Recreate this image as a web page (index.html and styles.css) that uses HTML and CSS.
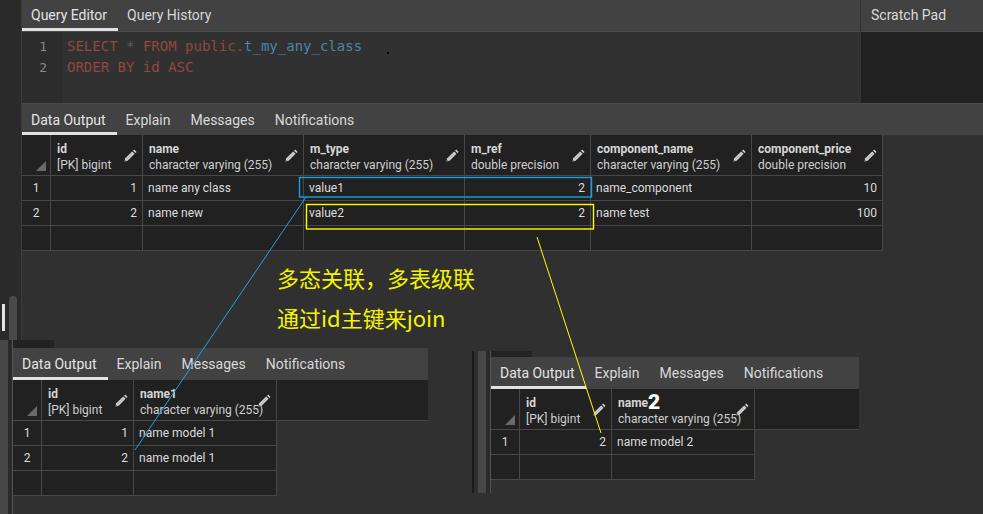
FILE: index.html
```html
<!DOCTYPE html>
<html lang="zh">
<head>
<meta charset="utf-8">
<title>Query Editor</title>
<link rel="stylesheet" href="styles.css">
</head>
<body>
<svg class="defs" aria-hidden="true">
  <symbol id="pencil" viewBox="0 0 16 16">
    <path d="M1.6 14.4l1-3.7 7.9-7.9 2.7 2.7-7.9 7.9z" fill="#d4d4d4"/>
    <path d="M11.5 1.9l1.3-1.3 2.7 2.7-1.3 1.3z" fill="#d4d4d4"/>
    <path d="M1.6 14.4l0.6-2.3 1.7 1.7z" fill="#6a6a6a"/>
    <path d="M4 11.8l7-7" stroke="#9a9a9a" stroke-width="0.8"/>
  </symbol>
</svg>

<div class="app">
  <aside class="sidebar">
    <div class="sb-row"><span class="sb-mark"></span><span class="sb-thumb"></span></div>
  </aside>

  <main class="main">
    <div class="top">
      <section class="editor-panel">
        <nav class="tabs tabs-top">
          <span class="tab active">Query Editor</span>
          <span class="tab">Query History</span>
        </nav>
        <div class="editor">
          <div class="gutter">1<br>2</div>
          <pre class="code"><span class="kw">SELECT</span> <span class="op">*</span> <span class="kw">FROM</span> <span class="kw">public.</span><span class="id">t_my_any_class</span>
<span class="kw">ORDER BY id ASC</span></pre>
        </div>
      </section>
      <section class="scratch">
        <div class="scratch-head">Scratch Pad</div>
        <div class="scratch-body"></div>
      </section>
    </div>

    <nav class="tabs tabs-out">
      <span class="tab active">Data Output</span>
      <span class="tab">Explain</span>
      <span class="tab">Messages</span>
      <span class="tab">Notifications</span>
    </nav>

    <div class="grid">
      <div class="hrow">
        <div class="hc w-rn corner"><span class="sort"></span></div>
        <div class="hc w-id"><div class="htext"><div class="hn">id</div><div class="ht">[PK] bigint</div></div><svg class="pencil"><use href="#pencil"/></svg></div>
        <div class="hc w-str"><div class="htext"><div class="hn">name</div><div class="ht">character varying (255)</div></div><svg class="pencil"><use href="#pencil"/></svg></div>
        <div class="hc w-str"><div class="htext"><div class="hn">m_type</div><div class="ht">character varying (255)</div></div><svg class="pencil"><use href="#pencil"/></svg></div>
        <div class="hc w-ref"><div class="htext"><div class="hn">m_ref</div><div class="ht">double precision</div></div><svg class="pencil"><use href="#pencil"/></svg></div>
        <div class="hc w-str"><div class="htext"><div class="hn">component_name</div><div class="ht">character varying (255)</div></div><svg class="pencil"><use href="#pencil"/></svg></div>
        <div class="hc w-price"><div class="htext"><div class="hn">component_price</div><div class="ht">double precision</div></div><svg class="pencil"><use href="#pencil"/></svg></div>
      </div>
      <div class="row">
        <div class="c w-rn rn">1</div><div class="c w-id num">1</div><div class="c w-str">name any class</div><div class="c w-str">value1</div><div class="c w-ref num">2</div><div class="c w-str">name_component</div><div class="c w-price num">10</div>
      </div>
      <div class="row">
        <div class="c w-rn rn">2</div><div class="c w-id num">2</div><div class="c w-str">name new</div><div class="c w-str">value2</div><div class="c w-ref num">2</div><div class="c w-str">name test</div><div class="c w-price num">100</div>
      </div>
      <div class="row">
        <div class="c w-rn rn"></div><div class="c w-id"></div><div class="c w-str"></div><div class="c w-str"></div><div class="c w-ref"></div><div class="c w-str"></div><div class="c w-price"></div>
      </div>
    </div>
  </main>
</div>

<div class="speck"></div>

<div class="note">多态关联，多表级联<br>通过id主键来join</div>

<div class="shot shot-left">
  <span class="strip s-gray8"></span><span class="strip s-dark4"></span>
  <div class="win">
    <div class="nub nub-8"></div>
    <nav class="tabs">
      <span class="tab active">Data Output</span>
      <span class="tab">Explain</span>
      <span class="tab">Messages</span>
      <span class="tab">Notifications</span>
    </nav>
    <div class="grid">
      <div class="hrow">
        <div class="hc w-rn corner"><span class="sort"></span></div>
        <div class="hc w-id"><div class="htext"><div class="hn">id</div><div class="ht">[PK] bigint</div></div><svg class="pencil"><use href="#pencil"/></svg></div>
        <div class="hc w-name1"><div class="htext"><div class="hn">name1</div><div class="ht">character varying (255)</div></div><svg class="pencil"><use href="#pencil"/></svg></div>
        <div class="hfill"></div>
      </div>
      <div class="row"><div class="c w-rn rn">1</div><div class="c w-id num">1</div><div class="c w-name1">name model 1</div></div>
      <div class="row"><div class="c w-rn rn">2</div><div class="c w-id num">2</div><div class="c w-name1">name model 1</div></div>
      <div class="row"><div class="c w-rn rn"></div><div class="c w-id"></div><div class="c w-name1"></div></div>
    </div>
  </div>
</div>

<div class="shot shot-right">
  <span class="strip s-black2"></span><span class="strip s-mid4"></span><span class="strip s-gray8"></span><span class="strip s-dark4"></span>
  <div class="win">
    <div class="nub nub-6"></div>
    <nav class="tabs">
      <span class="tab active">Data Output</span>
      <span class="tab">Explain</span>
      <span class="tab">Messages</span>
      <span class="tab">Notifications</span>
    </nav>
    <div class="grid">
      <div class="hrow">
        <div class="hc w-rn corner"><span class="sort"></span></div>
        <div class="hc w-id"><div class="htext"><div class="hn">id</div><div class="ht">[PK] bigint</div></div><svg class="pencil"><use href="#pencil"/></svg></div>
        <div class="hc w-name1"><div class="htext"><div class="hn">name<span class="scrawl">2</span></div><div class="ht">character varying (255)</div></div><svg class="pencil"><use href="#pencil"/></svg></div>
        <div class="hfill"></div>
      </div>
      <div class="row"><div class="c w-rn rn">1</div><div class="c w-id num">2</div><div class="c w-name1">name model 2</div></div>
      <div class="row"><div class="c w-rn rn"></div><div class="c w-id"></div><div class="c w-name1"></div></div>
    </div>
  </div>
</div>

<svg class="marks" viewBox="0 0 983 514" aria-hidden="true">
  <rect x="299.5" y="177.5" width="292" height="19.5" fill="none" stroke="#1c9fe2" stroke-width="1.4"/>
  <rect x="306.5" y="204.5" width="287" height="24.5" fill="none" stroke="#ffff00" stroke-width="1.4"/>
  <line x1="306" y1="197" x2="135" y2="450" stroke="#1ea2ea" stroke-width="1"/>
  <line x1="537" y1="237" x2="601" y2="433" stroke="#ffff00" stroke-width="1"/>
</svg>
</body>
</html>
```

FILE: styles.css
```css
* { box-sizing: border-box; }

html, body { margin: 0; padding: 0; }

body {
  width: 983px;
  height: 514px;
  overflow: hidden;
  position: relative;
  background: #303030;
  font-family: Roboto, "Noto Sans", sans-serif;
  color: #dcdcdc;
}

.defs { position: absolute; width: 0; height: 0; overflow: hidden; }

.app { display: flex; height: 514px; }

/* left strip */
.sidebar {
  width: 21px;
  flex: none;
  background: #2a2a2a;
  padding-top: 296px;
}
.sb-row { display: flex; height: 44px; }
.sb-mark { width: 3px; height: 27px; margin: 8px 0 0 2px; background: #e4e4e4; }
.sb-thumb { width: 8px; margin-left: 4px; background: #4a4a4a; border-radius: 4px 4px 0 0; }

.main {
  flex: 1;
  min-width: 0;
  border-left: 1px solid #3c3c3c;
  display: flex;
  flex-direction: column;
}

.top { display: flex; height: 103px; flex: none; }

.editor-panel { flex: 1; display: flex; flex-direction: column; min-width: 0; }

/* tabs */
.tabs {
  display: flex;
  height: 32px;
  flex: none;
  background: #424242;
}
.tabs-top { border-bottom: 1px solid #4c4c4c; }
.tabs-out { border-top: 1px solid #4a4a4a; }

.tab {
  display: flex;
  align-items: center;
  padding: 0 11px 0 9px;
  font-size: 14px;
  color: #d8d8d8;
  white-space: nowrap;
}
.tabs-top .tab { padding-bottom: 1px; }
.tab.active { color: #e4e4e4; box-shadow: inset 0 -3px 0 #e2e2e2; }

/* editor */
.editor { flex: 1; display: flex; }
.gutter {
  width: 41px;
  flex: none;
  background: #2c2c2c;
  padding: 4px 16px 0 0;
  text-align: right;
  font-family: "DejaVu Sans Mono", "Liberation Mono", monospace;
  font-size: 13px;
  line-height: 21px;
  color: #8a8a8a;
}
.code {
  flex: 1;
  margin: 0;
  padding: 4px 0 0 4px;
  background: #313131;
  font-family: "DejaVu Sans Mono", "Liberation Mono", monospace;
  font-size: 14px;
  line-height: 21px;
}
.kw { color: #934740; }
.op { color: #5e5e5e; }
.id { color: #4a86a8; }

.scratch {
  width: 123px;
  flex: none;
  border-left: 1px solid #353535;
  display: flex;
  flex-direction: column;
}
.scratch-head {
  height: 32px;
  flex: none;
  background: #424242;
  border-bottom: 1px solid #4c4c4c;
  padding: 0 0 2px 10px;
  display: flex;
  align-items: center;
  font-size: 14px;
  color: #dadada;
}
.scratch-body { flex: 1; background: #212121; }

/* grids */
.grid { display: flex; flex-direction: column; flex: none; }
.hrow { display: flex; height: 41px; }
.row { display: flex; height: 25px; }

.hc, .c {
  flex: none;
  background: #212121;
  border-right: 1px solid #474747;
  border-bottom: 1px solid #474747;
}
.hfill { flex: 1; background: #212121; border-bottom: 1px solid #474747; }

.w-rn { width: 29px; }
.w-id { width: 92px; }
.w-str { width: 161px; }
.w-ref { width: 126px; }
.w-price { width: 131px; }
.w-name1 { width: 143px; }

.hc {
  display: flex;
  align-items: center;
  padding: 0 5px 0 6px;
}
.hc.corner {
  align-items: flex-end;
  justify-content: flex-end;
  padding: 0 4px 4px 0;
}
.sort {
  width: 0;
  height: 0;
  border-left: 10px solid transparent;
  border-bottom: 10px solid #6a6a6a;
}
.htext {
  flex: 1 1 0;
  min-width: 0;
  padding-top: 3px;
  white-space: nowrap;
  font-size: 12px;
  line-height: 16px;
}
.hn { font-weight: 700; color: #d6d6d6; }
.ht { color: #cfcfcf; }
.pencil { width: 14px; height: 14px; flex: none; margin-top: 2px; }

.scrawl {
  font-size: 21px;
  font-weight: 900;
  color: #ffffff;
  line-height: 0;
  vertical-align: -2px;
}

.c {
  padding: 0 5px;
  font-size: 12px;
  line-height: 24px;
  white-space: nowrap;
  color: #dcdcdc;
}
.c.num { text-align: right; }
.c.rn { text-align: center; padding: 0; }

/* annotation */
.note {
  position: absolute;
  left: 277px;
  top: 257px;
  font-family: "Noto Sans CJK SC", "Noto Sans", sans-serif;
  font-size: 22px;
  line-height: 40px;
  color: #f4f400;
  white-space: nowrap;
}

.speck { position: absolute; left: 387px; top: 52px; width: 2px; height: 2px; background: #000; }

/* pasted result panels */
.shot { position: absolute; display: flex; }
.shot-left { left: 0; top: 340px; width: 428px; height: 174px; }
.shot-right { left: 472px; top: 351px; width: 387px; height: 142px; }

.strip { flex: none; }
.s-gray8 { width: 8px; background: #474747; }
.s-dark4 { width: 4px; background: #2a2a2a; }
.s-black2 { width: 2px; background: #1a1a1a; }
.s-mid4 { width: 4px; background: #2e2e2e; }

.win {
  flex: 1;
  min-width: 0;
  border-left: 1px solid #555555;
  background: #303030;
  display: flex;
  flex-direction: column;
}
.nub { width: 41px; flex: none; background: #232323; }
.nub-8 { height: 8px; }
.nub-6 { height: 6px; }

.marks {
  position: absolute;
  left: 0;
  top: 0;
  width: 983px;
  height: 514px;
  pointer-events: none;
}
```
